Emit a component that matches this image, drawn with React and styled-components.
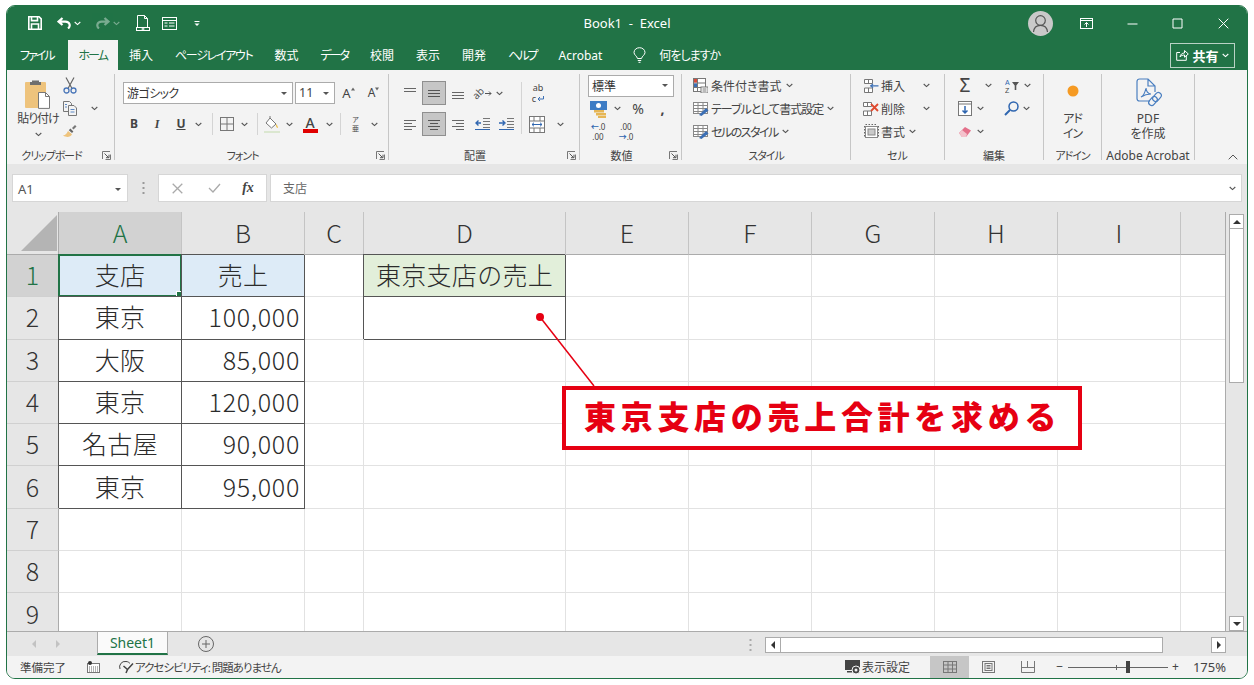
import React from 'react';
import styled, { createGlobalStyle } from 'styled-components';

const UI = `"Noto Sans", "Noto Sans CJK JP", sans-serif`;
const JP = `"Noto Sans CJK JP", "Noto Sans", sans-serif`;
const GREEN = '#217346';

const Global = createGlobalStyle`
  html, body { margin: 0; background: #fff; }
  body { font-family: ${UI}; font-feature-settings: "palt"; color: #333; overflow: hidden; }
  * { box-sizing: border-box; }
  svg { display: block; flex: none; }
`;

const Page = styled.div`
  padding: 5px 0 0 6px;
`;

const Win = styled.div`
  width: 1242px;
  height: 674px;
  border: 1px solid ${GREEN};
  border-radius: 9px;
  overflow: hidden;
  display: flex;
  flex-direction: column;
  background: #f3f3f3;
`;

const TitleBar = styled.header`
  height: 34px;
  background: ${GREEN};
  color: #fff;
  display: grid;
  grid-template-columns: 1fr auto 1fr;
  align-items: center;
  font-size: 13px;
`;

const Quick = styled.div`
  display: flex;
  align-items: center;
  padding-left: 21px;
  height: 100%;
`;

const Title = styled.span`
  white-space: pre;
`;

const Slot = styled.span`
  display: inline-flex;
  align-items: center;
  justify-content: center;
  width: ${(p) => p.$w}px;
  height: 100%;
  flex: none;
  opacity: ${(p) => p.$dim || 1};
`;

const WinTools = styled.div`
  display: flex;
  align-items: center;
  justify-content: flex-end;
  height: 100%;
  padding-right: 1px;
`;

const Avatar = styled.div`
  width: 25px;
  height: 25px;
  border-radius: 50%;
  background: #c9c9c9;
  display: flex;
  align-items: center;
  justify-content: center;
  margin-right: 10px;
`;

const TabBar = styled.nav`
  height: 30px;
  background: ${GREEN};
  color: #fff;
  display: flex;
  align-items: center;
  padding-left: 2px;
  font-size: 12px;
`;

const Tab = styled.div`
  padding: 0 ${(p) => p.$pr || p.$pad || 11}px 0 ${(p) => p.$pad || 11}px;
  height: 100%;
  display: flex;
  align-items: center;
  white-space: nowrap;
  letter-spacing: ${(p) => p.$ls || 0}px;
  background: ${(p) => (p.$active ? '#f3f3f3' : 'transparent')};
  color: ${(p) => (p.$active ? GREEN : '#fff')};
`;

const Share = styled.div`
  margin-left: auto;
  margin-right: 12px;
  width: 65px;
  height: 25px;
  border: 1px solid #b9d2c5;
  display: flex;
  align-items: center;
  justify-content: center;
  gap: 3px;
  font-weight: 700;
  font-size: 13px;
`;

const Kana = styled.span`
  letter-spacing: ${(p) => p.$ls || -1}px;
  white-space: nowrap;
  margin: ${(p) => p.$m || 0};
`;

const Ribbon = styled.section`
  height: 94px;
  padding-top: 4px;
  display: flex;
  background: #f3f3f3;
  font-size: 12px;
  color: #444;
`;

const Group = styled.div`
  width: ${(p) => p.$w}px;
  height: 86px;
  border-right: 1px solid #c6c6c6;
  display: flex;
  flex-direction: column;
  flex: none;
`;

const GroupBody = styled.div`
  height: 73px;
  flex: none;
  padding-left: ${(p) => p.$left || 0}px;
  display: flex;
  flex-direction: ${(p) => (p.$col ? 'column' : 'row')};
`;

const GroupLabel = styled.div`
  height: 16px;
  flex: none;
  display: flex;
  align-items: center;
  font-size: ${(p) => p.$size || 11}px;
  white-space: nowrap;
  color: #444;
`;

const GroupName = styled.span`
  flex: 1;
  text-align: center;
  letter-spacing: ${(p) => p.$ls || 0}px;
`;

const Launch = styled.span`
  margin: 0 3px 0 6px;
`;

const Stack = styled.div`
  display: flex;
  flex-direction: column;
  width: ${(p) => (p.$w ? `${p.$w}px` : 'auto')};
`;

const StackRow = styled.div`
  height: 23px;
  flex: none;
  display: flex;
  align-items: center;
  white-space: nowrap;
`;

const ToolRows = styled.div`
  padding-top: 8px;
  display: flex;
  flex-direction: column;
  gap: 9px;
`;

const ToolRow = styled.div`
  height: 22px;
  display: flex;
  align-items: center;
`;

const Select = styled.div`
  width: ${(p) => p.$w}px;
  height: ${(p) => p.$h || 22}px;
  background: #fff;
  border: 1px solid #ababab;
  margin-right: ${(p) => p.$mr || 0}px;
  padding: 0 3px;
  display: flex;
  align-items: center;
  justify-content: space-between;
  font-size: 12px;
  color: #333;
  flex: none;
`;

const Caret = styled.span`
  width: 0;
  height: 0;
  border: 3px solid transparent;
  border-top: 3px solid #555;
  border-bottom: 0;
  margin: 0 2px;
`;

const Divider = styled.span`
  width: 1px;
  height: ${(p) => p.$h || 22}px;
  background: #d4d4d4;
  flex: none;
`;

const TallDivider = styled(Divider)`
  height: 52px;
  margin-top: 30px;
`;

const ToolButton = styled.span`
  width: ${(p) => p.$w}px;
  height: 24px;
  display: inline-flex;
  align-items: center;
  justify-content: center;
  flex: none;
  background: ${(p) => (p.$on ? '#c6c6c6' : 'transparent')};
  border: 1px solid ${(p) => (p.$on ? '#8f8f8f' : 'transparent')};
`;

const Glyph = styled.span`
  font-family: ${(p) => p.$font || UI};
  font-weight: ${(p) => p.$weight || 400};
  font-style: ${(p) => (p.$italic ? 'italic' : 'normal')};
  font-size: ${(p) => p.$size || 12}px;
  color: ${(p) => p.$color || '#444'};
  line-height: 1;
  text-decoration: ${(p) => (p.$under ? 'underline' : 'none')};
`;

const TinyStack = styled.span`
  display: flex;
  flex-direction: column;
  align-items: center;
  font-size: ${(p) => p.$size || 8}px;
  line-height: ${(p) => (p.$size || 8) + 2}px;
  color: #444;
  white-space: nowrap;
`;

const BlueMark = styled.span`
  color: #2f66b0;
  font-weight: 700;
`;

const Orient = styled.span`
  display: inline-flex;
  align-items: center;
  gap: 1px;
`;

const RotatedAb = styled.span`
  display: inline-block;
  transform: rotate(-45deg);
  font-size: 10px;
  line-height: 10px;
  color: #555;
`;

const ColorA = styled.span`
  display: flex;
  flex-direction: column;
  align-items: center;
  width: 16px;
  font-size: 14px;
  line-height: 13px;
  font-weight: 500;
  color: #444;
  &::after {
    content: '';
    width: 15px;
    height: 4px;
    background: #e00000;
  }
`;

const Big = styled.div`
  width: ${(p) => p.$w || '100%'};
  display: flex;
  flex-direction: column;
  align-items: center;
  padding-top: ${(p) => p.$top || 0}px;
  font-size: 12px;
  line-height: 15px;
  text-align: center;
`;

const BigIcon = styled.div`
  height: ${(p) => p.$h}px;
  margin-bottom: ${(p) => p.$mb || 0}px;
  display: flex;
  align-items: center;
  justify-content: center;
`;

const Collapse = styled.div`
  margin-left: auto;
  margin-right: 9px;
  align-self: flex-end;
  padding-bottom: 4px;
`;

const FormulaBar = styled.section`
  height: 48px;
  background: #e6e6e6;
  display: flex;
  align-items: flex-start;
  padding: 10px 5px 0 5px;
`;

const NameBox = styled.div`
  width: 116px;
  height: 28px;
  background: #fff;
  border: 1px solid #d6d6d6;
  display: flex;
  align-items: center;
  justify-content: space-between;
  padding: 2px 4px 0 5px;
  font-size: 13px;
  color: #555;
`;

const Dots = styled.span`
  width: 30px;
  height: 28px;
  display: flex;
  align-items: center;
  justify-content: center;
`;

const FormulaTools = styled.div`
  width: 109px;
  height: 28px;
  background: #fff;
  border: 1px solid #d6d6d6;
  display: flex;
  align-items: center;
  padding-left: 9px;
`;

const FormulaInput = styled.div`
  flex: 1;
  margin-left: 3px;
  height: 28px;
  background: #fff;
  border: 1px solid #d6d6d6;
  display: flex;
  align-items: center;
  justify-content: space-between;
  padding: 0 5px 0 12px;
  font-size: 12px;
  color: #666;
`;

const Sheet = styled.section`
  height: 419px;
  flex: none;
  display: flex;
  background: #e6e6e6;
  position: relative;
`;

const Grid = styled.div`
  width: 1219px;
  height: 419px;
  overflow: hidden;
  display: grid;
  grid-template-columns: 52px 123px 123px 59px 202px 123px 123px 123px 123px 123px 45px;
  grid-template-rows: 43px repeat(9, 42.3px);
  background: #fff;
  border-right: 1px solid #ababab;
  font-family: ${JP};
  font-size: 25px;
  font-feature-settings: normal;
  font-weight: 300;
  color: #2b2b2b;
`;

const Corner = styled.div`
  background: #e6e6e6;
  border-bottom: 1px solid #ababab;
  border-right: 1px solid #ababab;
  display: flex;
  align-items: center;
  justify-content: flex-end;
  padding-right: 1px;
`;

const ColHead = styled.div`
  background: ${(p) => (p.$on ? '#d2d2d2' : '#e6e6e6')};
  color: ${(p) => (p.$on ? GREEN : '#333')};
  border-right: 1px solid #c4c4c4;
  border-bottom: 1px solid #ababab;
  padding-bottom: 2px;
  display: flex;
  align-items: center;
  justify-content: center;
`;

const RowHead = styled.div`
  background: ${(p) => (p.$on ? '#d2d2d2' : '#e6e6e6')};
  color: ${(p) => (p.$on ? GREEN : '#333')};
  border-right: 1px solid #ababab;
  border-bottom: 1px solid #d0d0d0;
  padding-bottom: 3px;
  display: flex;
  align-items: center;
  justify-content: center;
`;

const Cell = styled.div`
  position: relative;
  display: flex;
  align-items: center;
  justify-content: ${(p) => (p.$right ? 'flex-end' : 'center')};
  padding: 0 ${(p) => (p.$right ? 4 : 0)}px 3px 0;
  letter-spacing: ${(p) => (p.$right ? 0.7 : 0.3)}px;
  background: ${(p) => p.$fill || '#fff'};
  border-right: 1px solid ${(p) => (p.$box ? '#555' : '#e2e2e2')};
  border-bottom: 1px solid ${(p) => (p.$box ? '#555' : '#e2e2e2')};
  box-shadow: ${(p) => (p.$box ? '-1px -1px 0 #555' : 'none')};
  white-space: nowrap;
  z-index: ${(p) => (p.$box ? 1 : 0)};
`;

const Selected = styled.span`
  position: absolute;
  inset: -1px;
  border: 2px solid ${GREEN};
  z-index: 2;
  &::after {
    content: '';
    position: absolute;
    right: -3px;
    bottom: -3px;
    width: 5px;
    height: 5px;
    background: ${GREEN};
    border: 1px solid #fff;
  }
`;

const VScroll = styled.div`
  width: 15px;
  margin: 2px 0 0 3px;
  display: flex;
  flex-direction: column;
  height: 417px;
`;

const ScrollBtn = styled.div`
  height: ${(p) => p.$h || 15}px;
  width: ${(p) => p.$w || '100%'};
  flex: none;
  background: #fff;
  border: 1px solid #ababab;
  display: flex;
  align-items: center;
  justify-content: center;
`;

const Tri = styled.span`
  width: 0;
  height: 0;
  border-style: solid;
  border-color: transparent;
  opacity: ${(p) => p.$dim || 1};
  ${(p) => p.$dir === 'up' && 'border-width: 0 4px 4px; border-bottom-color: #333;'}
  ${(p) => p.$dir === 'down' && 'border-width: 4px 4px 0; border-top-color: #333;'}
  ${(p) => p.$dir === 'left' && 'border-width: 4px 4px 4px 0; border-right-color: #333;'}
  ${(p) => p.$dir === 'right' && 'border-width: 4px 0 4px 4px; border-left-color: #333;'}
`;

const VThumb = styled.div`
  height: 154px;
  flex: none;
  background: #fff;
  border: 1px solid #ababab;
  border-top: 0;
`;

const VRest = styled.div`
  flex: 1;
`;

const Callout = styled.div`
  position: absolute;
  left: 555px;
  top: 174px;
  width: 520px;
  height: 64px;
  background: #fff;
  border: 4px solid #e60012;
  z-index: 3;
  display: flex;
  align-items: center;
  padding: 0 0 6px 18px;
  font-family: ${JP};
  font-feature-settings: normal;
  font-weight: 900;
  font-size: 32px;
  letter-spacing: 4.7px;
  color: #e60012;
  white-space: nowrap;
`;

const Leader = styled.svg`
  position: absolute;
  left: 520px;
  top: 95px;
  z-index: 3;
`;

const SheetBar = styled.section`
  height: 25px;
  flex: none;
  background: #e6e6e6;
  border-top: 1px solid #ababab;
  display: flex;
  align-items: flex-start;
`;

const Nav = styled.div`
  width: 90px;
  height: 24px;
  display: flex;
  align-items: center;
  gap: 20px;
  padding-left: 25px;
`;

const SheetTab = styled.div`
  width: 71px;
  height: 23px;
  background: #fafafa;
  border-left: 1px solid #ababab;
  border-right: 1px solid #ababab;
  border-bottom: 2px solid ${GREEN};
  color: ${GREEN};
  font-size: 14px;
  display: flex;
  align-items: center;
  justify-content: center;
`;

const AddSheet = styled.div`
  margin-left: 30px;
  height: 24px;
  display: flex;
  align-items: center;
`;

const HScroll = styled.div`
  margin-left: auto;
  margin-right: 21px;
  margin-top: 5px;
  width: 477px;
  height: 16px;
  display: flex;
  align-items: stretch;
`;

const HThumb = styled.div`
  width: 382px;
  flex: none;
  background: #fff;
  border: 1px solid #ababab;
  border-left: 0;
`;

const HRest = styled.div`
  flex: 1;
`;

const HDots = styled.span`
  margin: 2px 13px 0 0;
`;

const Status = styled.footer`
  height: 22px;
  flex: none;
  background: #f3f3f3;
  display: flex;
  align-items: center;
  font-size: 11.5px;
  color: #444;
  padding-left: 13px;
`;

const StatusText = styled.span`
  white-space: nowrap;
  margin: 0 ${(p) => p.$mr || 0}px 0 ${(p) => p.$ml || 0}px;
  font-size: ${(p) => p.$size || 11.5}px;
  letter-spacing: ${(p) => p.$ls || 0}px;
`;

const StatusLeftIcon = styled.span`
  margin-left: 18px;
  display: flex;
  align-items: center;
`;

const StatusRight = styled.div`
  margin-left: auto;
  display: flex;
  align-items: center;
  height: 100%;
  padding-right: 21px;
`;

const ViewBtn = styled.span`
  width: 39px;
  height: 22px;
  display: inline-flex;
  align-items: center;
  justify-content: center;
  background: ${(p) => (p.$on ? '#c6c6c6' : 'transparent')};
`;

const Zoom = styled.div`
  position: relative;
  width: 100px;
  height: 1px;
  background: #666;
  margin: 0 4px 0 5px;
`;

const ZoomTick = styled.span`
  position: absolute;
  left: 48px;
  top: -2px;
  width: 1px;
  height: 5px;
  background: #666;
`;

const ZoomThumb = styled.span`
  position: absolute;
  left: 58px;
  top: -6px;
  width: 4px;
  height: 12px;
  background: #444;
`;

const Grow = styled.span`
  display: inline-flex;
  align-items: flex-start;
`;

/* icons */
const Chev = ({ c = '#555' }) => (
  <svg width="7" height="5" viewBox="0 0 7 5">
    <path d="M.7 1l2.800 2.600L6.300 1" fill="none" stroke={c} strokeWidth="1.1" />
  </svg>
);

const LaunchIcon = () => (
  <svg width="9" height="9" viewBox="0 0 9 9">
    <path d="M.5 8V.5H8M8.500 3.500V8.500H3.500" fill="none" stroke="#777" />
    <path d="M2.500 2.500l4 4M4 6.700h3V3.700" fill="none" stroke="#555" />
  </svg>
);

const Lines = ({ rows, w = 14, h = 12, c = '#666' }) => (
  <svg width={w} height={h} viewBox={`0 0 ${w} ${h}`}>
    {rows.map(([a, b, y]) => (
      <path key={y} d={`M${a} ${y}.5H${b}`} stroke={c} />
    ))}
  </svg>
);

const SaveIcon = () => (
  <svg width="14" height="14" viewBox="0 0 14 14" fill="none" stroke="#fff" strokeWidth="1.6">
    <path d="M.8.800h10.300l2.100 2.100v10.300H.8z" />
    <path d="M3.500 1v3.600h6V1M3.500 13V8h7v5" />
  </svg>
);

const UndoIcon = ({ flip }) => (
  <svg width="14" height="12" viewBox="0 0 14 12" fill="none" stroke="#fff" strokeWidth="2.200">
    <path
      d="M5.500 1L1.600 4.600l3.900 3.400M2 4.600h6.300c5 0 5.400 5 2.700 6.900"
      transform={flip ? 'translate(14 0) scale(-1 1)' : undefined}
    />
  </svg>
);

const NewDocIcon = () => (
  <svg width="14" height="16" viewBox="0 0 14 16" fill="none" stroke="#fff">
    <path d="M1.500 12V.5h7l3 3V12M8.500 .5v3h3" />
    <rect x=".5" y="12.500" width="13" height="3" />
    <circle cx="7" cy="14" r="1" />
  </svg>
);

const FormIcon = () => (
  <svg width="15" height="13" viewBox="0 0 15 13" fill="none" stroke="#fff">
    <rect x=".5" y=".5" width="14" height="12" />
    <path d="M.5 3.500h14M2.500 6h3M7 6h5.500M2.500 9h3M7 9h5.500" />
  </svg>
);

const CustomizeIcon = () => (
  <svg width="6" height="7" viewBox="0 0 6 7">
    <path d="M.5 1.500h5" stroke="#fff" />
    <path d="M.5 3.500h5L3 6z" fill="#fff" />
  </svg>
);

const PersonIcon = () => (
  <svg width="19" height="19" viewBox="0 0 19 19" fill="none" stroke="#555" strokeWidth="1.2">
    <circle cx="9.500" cy="6.500" r="4.800" />
    <path d="M2.500 18c.4-4.500 3-6.600 7-6.600s6.600 2.100 7 6.600" />
  </svg>
);

const DisplayIcon = () => (
  <svg width="13" height="11" viewBox="0 0 13 11" fill="none" stroke="#fff">
    <rect x=".5" y=".5" width="12" height="10" />
    <path d="M.5 2.500h12" />
    <path d="M6.500 9V4.500M4.500 6.500l2-2 2 2" />
  </svg>
);

const CtrlIcon = ({ d }) => (
  <svg width="11" height="11" viewBox="0 0 11 11" fill="none" stroke="#fff">
    <path d={d} />
  </svg>
);

const BulbIcon = () => (
  <svg width="13" height="16" viewBox="0 0 13 16" fill="none" stroke="#fff">
    <path d="M4.500 11.500C4 9 1 8 1 5.500 1 2.700 3.500.7 6.500.7S12 2.700 12 5.500c0 2.500-3 3.500-3.500 6zM4.800 13.500h3.400M5.500 15.300h2" />
  </svg>
);

const ShareIcon = () => (
  <svg width="13" height="12" viewBox="0 0 13 12" fill="none" stroke="#fff">
    <path d="M4 3.500H.7v7.800h9.600V7M4 8c.3-2.600 2.200-4 4.500-4V1.500L12.300 5 8.500 8.200V6C6.700 6 5 6.500 4 8z" />
  </svg>
);

const PasteIcon = () => (
  <svg width="28" height="30" viewBox="0 0 28 30">
    <rect x="1" y="3" width="21" height="26" rx="1" fill="#eec37c" />
    <path d="M8 3V1.500h7V3h2v3H6V3z" fill="#6e6e6e" />
    <path d="M14.500 13.500h7l4 4v11.900h-11z" fill="#fff" stroke="#777" />
    <path d="M21.500 13.500v4h4" fill="none" stroke="#777" />
  </svg>
);

const CutIcon = () => (
  <svg width="14" height="17" viewBox="0 0 14 17" fill="none">
    <path d="M3 .5l6 11M11 .5L5 11.500" stroke="#666" strokeWidth="1.200" />
    <circle cx="3.500" cy="13.500" r="2.500" stroke="#4a76b8" strokeWidth="1.300" />
    <circle cx="10.500" cy="13.500" r="2.500" stroke="#4a76b8" strokeWidth="1.300" />
  </svg>
);

const CopyIcon = () => (
  <svg width="14" height="15" viewBox="0 0 14 15" fill="#f3f3f3" stroke="#777">
    <path d="M.5.500h6l2 2v8h-8z" />
    <path d="M5.500 4.500h5.500l2.500 2.500v7.500h-8z" />
    <path d="M7.500 8.500h4M7.500 11h4M2 3.500h2M2 6h2" stroke="#5c88c4" />
  </svg>
);

const BrushIcon = () => (
  <svg width="14" height="13" viewBox="0 0 14 13">
    <path d="M0 10.500c2.600-.3 4-2.300 5-4.500l4 3.200C7.500 12 4 13 0 10.500z" fill="#eec37c" />
    <path d="M5.800 5.200L7.400 3.600l3 2.800-1.400 1.700z" fill="#666" />
    <path d="M9 3l3-3 1.500 1.500-3 3z" fill="#777" />
  </svg>
);

const GrowIcon = ({ up }) => (
  <Grow>
    <Glyph $size={up ? 13 : 12}>A</Glyph>
    <svg width="4" height="4" viewBox="0 0 4 4">
      <path d={up ? 'M0 3.500L2 .5l2 3z' : 'M0 .5l2 3 2-3z'} fill="#666" />
    </svg>
  </Grow>
);

const BorderIcon = () => (
  <svg width="14" height="14" viewBox="0 0 14 14" fill="none" stroke="#777">
    <rect x=".5" y=".5" width="13" height="13" />
    <path d="M7 .5v13M.5 7h13" />
  </svg>
);

const FillIcon = () => (
  <svg width="17" height="17" viewBox="0 0 17 17">
    <path d="M6 2l6 6-4.500 4L2 7z" fill="#fff" stroke="#777" />
    <path d="M6 2V0" stroke="#777" />
    <path d="M12 8c1.500 1.500 2 3 2 4-1.500 0-2.500-2-2-4z" fill="#ecc04c" />
    <rect y="15" width="16" height="2" fill="#dbe7d0" />
  </svg>
);

const OrientArrow = () => (
  <svg width="7" height="7" viewBox="0 0 7 7" fill="none" stroke="#555">
    <path d="M0 3.500h6M4 1.500l2 2-2 2" />
  </svg>
);

const ReturnArrow = () => (
  <svg width="7" height="6" viewBox="0 0 7 6" fill="none" stroke="#3b6fb5">
    <path d="M6.500 0v3h-5M3 1L1 3l2 2" />
  </svg>
);

const IndentIcon = ({ flip }) => (
  <svg width="15" height="12" viewBox="0 0 15 12" fill="none">
    <path d="M8 .5h7M8 3.500h7M8 6.500h7M8 9.500h7" stroke="#777" />
    <path d={flip ? 'M0 5h5M3.500 2.500L6 5 3.500 7.500' : 'M6 5H1M3.500 2.500L1 5l2.500 2.500'} stroke="#2f66b0" strokeWidth="1.400" />
    <path d="M0 11.500h15" stroke="#2f66b0" />
  </svg>
);

const MergeIcon = () => (
  <svg width="16" height="17" viewBox="0 0 16 17" fill="#fff" stroke="#777">
    <rect x=".5" y=".5" width="15" height="16" />
    <path d="M.5 5h15M.5 12h15M5 .5V5M11 .5V5M5 12v4.500M11 12v4.500" />
    <path d="M3 8.500h10M5 6.700L3 8.500l2 1.800M11 6.700l2 1.800-2 1.800" stroke="#2f66b0" fill="none" />
  </svg>
);

const CurrencyIcon = () => (
  <svg width="19" height="18" viewBox="0 0 19 18">
    <rect x="1" y="1" width="17" height="9" fill="#3d7cc4" />
    <circle cx="9.500" cy="5.500" r="2.500" fill="#fff" />
    <rect x="5" y="10" width="10" height="2.500" fill="#e6b655" />
    <rect x="7" y="13" width="10" height="2.500" fill="#e6b655" />
    <rect x="9" y="16" width="8" height="2" fill="#e6b655" />
  </svg>
);

const CondIcon = () => (
  <svg width="15" height="15" viewBox="0 0 15 15" fill="#fff" stroke="#777">
    <rect x=".5" y=".5" width="12" height="13" />
    <path d="M.5 5h12M.5 9.500h12M4.500 .5v13" />
    <rect x="1" y="1" width="3" height="3.500" fill="#d84a3a" stroke="none" />
    <rect x="1" y="5.500" width="3" height="3.500" fill="#3b6fb5" stroke="none" />
    <rect x="8" y="9" width="7" height="6" fill="#fff" />
    <path d="M9.500 11h4M9.500 13h4" />
  </svg>
);

const TableStyleIcon = () => (
  <svg width="17" height="14" viewBox="0 0 17 14" fill="#fff" stroke="#888">
    <rect x=".5" y=".5" width="14" height="11" />
    <path d="M.5 3.500h14M.5 6.500h14M.5 9.500h14M5 .5v11M10 .5v11" />
    <path d="M6 13l7-7 2.500 2.500-7 5.500z" fill="#3b6fb5" stroke="none" />
  </svg>
);

const InsertIcon = () => (
  <svg width="15" height="14" viewBox="0 0 15 14" fill="#fff" stroke="#777">
    <path d="M.5.500h8v4h-8zM.5 9h8v4.500h-8zM4.500 .5v4M4.500 9v4.500" />
    <path d="M6 6.800h8.500M9 4.800L7 6.800l2 2" fill="none" stroke="#3b6fb5" strokeWidth="1.200" />
  </svg>
);

const DeleteIcon = () => (
  <svg width="17" height="14" viewBox="0 0 17 14" fill="#fff" stroke="#777">
    <path d="M.5.500h8v4h-8zM.5 9h8v4.500h-8zM4.500 .5v4M4.500 9v4.500" />
    <path d="M8 2l7 7M15 2L8 9" fill="none" stroke="#e04a2f" strokeWidth="1.800" />
  </svg>
);

const FormatIcon = () => (
  <svg width="15" height="15" viewBox="0 0 15 15" fill="#fff" stroke="#888">
    <rect x="1.500" y="2.500" width="12" height="11" />
    <rect x="4" y="5" width="7" height="6" fill="#c9c9c9" />
    <path d="M1.500 .5h12M.5 2v11M14.500 2v11" strokeDasharray="1.500 1.500" stroke="#666" />
  </svg>
);

const FillDownIcon = () => (
  <svg width="14" height="15" viewBox="0 0 14 15" fill="#fff" stroke="#777">
    <rect x=".5" y=".5" width="13" height="14" />
    <path d="M.5 3h13" />
    <path d="M7 5v7M4.500 9.500L7 12l2.500-2.500" fill="none" stroke="#2f66b0" strokeWidth="1.500" />
  </svg>
);

const SortIcon = () => (
  <svg width="14" height="14" viewBox="0 0 14 14">
    <text x="0" y="6" fontSize="7" fill="#2f66b0" fontFamily="Liberation Sans">A</text>
    <text x="0" y="13.500" fontSize="7" fill="#444" fontFamily="Liberation Sans">Z</text>
    <path d="M7 3h7l-2.700 3.500V11H9.700V6.500z" fill="#555" />
  </svg>
);

const FindIcon = () => (
  <svg width="15" height="15" viewBox="0 0 15 15" fill="none" stroke="#2f66b0" strokeWidth="1.500">
    <circle cx="9.500" cy="5.500" r="4.500" />
    <path d="M6 9l-5 5" strokeWidth="2" />
  </svg>
);

const EraserIcon = () => (
  <svg width="13" height="11" viewBox="0 0 13 11">
    <path d="M0 7l6-6 6 3.500L7 11H3z" fill="#e4708a" />
    <path d="M0 7l3-3 5 4-1 3H3z" fill="#f4c2cc" />
  </svg>
);

const AcrobatIcon = () => (
  <svg width="27" height="30" viewBox="0 0 27 30" fill="none" stroke="#4a7fc0" strokeWidth="1.200">
    <path d="M15 23H4.500A2.500 2.500 0 012 20.500v-17A2.500 2.500 0 014.500 1H13l7 7v6M13 1v7h7" />
    <path d="M6 19c2-1 4-4 5-9 0 3 2 6 5 6-3 0-7 1-10 3z" />
    <rect x="15" y="18" width="6" height="10" rx="3" transform="rotate(40 18 23)" />
    <rect x="19" y="14" width="6" height="10" rx="3" transform="rotate(40 22 19)" />
  </svg>
);

const Triangle = () => (
  <svg width="36" height="36" viewBox="0 0 36 36">
    <path d="M36 0v36H0z" fill="#b4b4b4" />
  </svg>
);

const GridIcon = () => (
  <svg width="14" height="12" viewBox="0 0 14 12" fill="none" stroke="#777">
    <rect x=".5" y=".5" width="13" height="11" />
    <path d="M5 .5v11M9.500 .5v11M.5 4h13M.5 8h13" />
  </svg>
);

const PageIcon = () => (
  <svg width="13" height="12" viewBox="0 0 13 12" fill="none" stroke="#777">
    <rect x=".5" y=".5" width="12" height="11" />
    <rect x="3" y="2.500" width="7" height="7" />
    <path d="M4.500 4.500h4M4.500 6h4M4.500 7.500h4" />
  </svg>
);

const BreakIcon = () => (
  <svg width="14" height="12" viewBox="0 0 14 12" fill="none" stroke="#777">
    <path d="M.5 0v11.500h13V0M.5 6.500h13M6.500 0v6.500" />
  </svg>
);

const StatusMacroIcon = () => (
  <svg width="13" height="12" viewBox="0 0 13 12">
    <rect x=".5" y="2.500" width="12" height="9" fill="#fff" stroke="#777" />
    <rect x="1" y="0" width="4" height="4" rx="2" fill="#333" />
    <path d="M2 6h9M2 8h9M2 10h9" stroke="#666" strokeDasharray="1 1" />
  </svg>
);

const A11yIcon = () => (
  <svg width="17" height="14" viewBox="0 0 17 14" fill="none" stroke="#444">
    <path d="M2 9A5.500 5.500 0 018 1.500c2 0 3 1 4 2" />
    <path d="M5.500 6l4 3.500 5.500-6" strokeWidth="1.500" />
    <path d="M8 13l1.500-3.500" strokeWidth="1.500" />
  </svg>
);

const DisplaySetIcon = () => (
  <svg width="17" height="15" viewBox="0 0 17 15">
    <rect y="0" width="15" height="10" fill="#444" />
    <circle cx="11" cy="10" r="4" fill="#444" stroke="#f3f3f3" />
    <circle cx="11" cy="10" r="1.500" fill="#f3f3f3" />
    <rect x="2" y="11" width="5" height="1.500" fill="#444" />
  </svg>
);

const GripDots = ({ c = '#999' }) => (
  <svg width="3" height="12" viewBox="0 0 3 12" fill={c}>
    <rect x=".5" y="0" width="2" height="2" />
    <rect x=".5" y="5" width="2" height="2" />
    <rect x=".5" y="10" width="2" height="2" />
  </svg>
);

const COLUMNS = ['A', 'B', 'C', 'D', 'E', 'F', 'G', 'H', 'I', ''];
const BLUE = '#ddebf7';
const MINT = '#e2efda';

const CELLS = {
  A1: { text: '支店', fill: BLUE, box: true, selected: true },
  B1: { text: '売上', fill: BLUE, box: true },
  A2: { text: '東京', box: true },
  B2: { text: '100,000', box: true, right: true },
  A3: { text: '大阪', box: true },
  B3: { text: '85,000', box: true, right: true },
  A4: { text: '東京', box: true },
  B4: { text: '120,000', box: true, right: true },
  A5: { text: '名古屋', box: true },
  B5: { text: '90,000', box: true, right: true },
  A6: { text: '東京', box: true },
  B6: { text: '95,000', box: true, right: true },
  D1: { text: '東京支店の売上', fill: MINT, box: true },
  D2: { text: '', box: true },
};

const TABS = [
  { t: '挿入' },
  { t: 'ページレイアウト', ls: -1.3 },
  { t: '数式' },
  { t: 'データ', ls: -2 },
  { t: '校閲' },
  { t: '表示' },
  { t: '開発' },
  { t: 'ヘルプ', ls: -2 },
  { t: 'Acrobat' },
];

function Spreadsheet() {
  const rows = [1, 2, 3, 4, 5, 6, 7, 8, 9];
  return (
    <Grid>
      <Corner><Triangle /></Corner>
      {COLUMNS.map((c, i) => (
        <ColHead key={`h${i}`} $on={c === 'A'}>{c}</ColHead>
      ))}
      {rows.map((r) => (
        <React.Fragment key={r}>
          <RowHead $on={r === 1}>{r}</RowHead>
          {COLUMNS.map((c, i) => {
            const cell = CELLS[`${c}${r}`] || {};
            return (
              <Cell key={i} $fill={cell.fill} $box={cell.box} $right={cell.right}>
                {cell.text}
                {cell.selected && <Selected />}
              </Cell>
            );
          })}
        </React.Fragment>
      ))}
    </Grid>
  );
}

export default function App() {
  return (
    <Page>
      <Global />
      <Win>
        <TitleBar>
          <Quick>
            <Slot $w={14}><SaveIcon /></Slot>
            <Slot $w={15} />
            <Slot $w={14}><UndoIcon /></Slot>
            <Slot $w={12}><Chev c="#fff" /></Slot>
            <Slot $w={13} />
            <Slot $w={13} $dim={0.4}><UndoIcon flip /></Slot>
            <Slot $w={15} $dim={0.4}><Chev c="#fff" /></Slot>
            <Slot $w={12} />
            <Slot $w={14}><NewDocIcon /></Slot>
            <Slot $w={12} />
            <Slot $w={15}><FormIcon /></Slot>
            <Slot $w={16} />
            <Slot $w={8}><CustomizeIcon /></Slot>
          </Quick>
          <Title>Book1  -  Excel</Title>
          <WinTools>
            <Avatar><PersonIcon /></Avatar>
            <Slot $w={46}><DisplayIcon /></Slot>
            <Slot $w={46}><CtrlIcon d="M.5 6h10" /></Slot>
            <Slot $w={45}><CtrlIcon d="M1 1h9v9H1z" /></Slot>
            <Slot $w={46}><CtrlIcon d="M.7.700l9.600 9.600M10.300 .7L.7 10.300" /></Slot>
          </WinTools>
        </TitleBar>

        <TabBar>
          <Tab $ls={-2} $pr={14}>ファイル</Tab>
          <Tab $active $ls={-2}>ホーム</Tab>
          {TABS.map((tab) => <Tab key={tab.t} $ls={tab.ls}>{tab.t}</Tab>)}
          <Tab $pad={20}><BulbIcon /><Kana $m="0 0 0 13px">何をしますか</Kana></Tab>
          <Share><ShareIcon />共有<Chev c="#fff" /></Share>
        </TabBar>

        <Ribbon>
          <Group $w={108}>
            <GroupBody $left={6}>
              <Big $w="50px" $top={4}>
                <BigIcon $h={31} $mb={2}><PasteIcon /></BigIcon>
                <Kana>貼り付け</Kana>
                <BigIcon $h={17}><Chev /></BigIcon>
              </Big>
              <Stack $w={18}>
                <StackRow><CutIcon /></StackRow>
                <StackRow><CopyIcon /></StackRow>
                <StackRow><BrushIcon /></StackRow>
              </Stack>
              <Stack $w={26}>
                <StackRow />
                <StackRow><Slot $w={26}><Chev /></Slot></StackRow>
              </Stack>
            </GroupBody>
            <GroupLabel>
              <GroupName $ls={-1.1}>クリップボード</GroupName>
              <Launch><LaunchIcon /></Launch>
            </GroupLabel>
          </Group>

          <Group $w={274}>
            <GroupBody $col $left={8}>
              <ToolRows>
                <ToolRow>
                  <Select $w={170} $mr={2}><Kana $ls={-0.6}>游ゴシック</Kana><Caret /></Select>
                  <Select $w={40}><Glyph $size={12.5}>11</Glyph><Caret /></Select>
                  <Slot $w={1} />
                  <Slot $w={25}><GrowIcon up /></Slot>
                  <Slot $w={25}><GrowIcon /></Slot>
                </ToolRow>
                <ToolRow>
                  <Slot $w={22}><Glyph $size={12} $weight={700}>B</Glyph></Slot>
                  <Slot $w={24}><Glyph $size={12} $weight={700} $italic $font='"Liberation Serif", serif'>I</Glyph></Slot>
                  <Slot $w={24}><Glyph $size={12} $weight={700} $under>U</Glyph></Slot>
                  <Slot $w={11}><Chev /></Slot>
                  <Slot $w={8} />
                  <Divider />
                  <Slot $w={27}><BorderIcon /></Slot>
                  <Slot $w={9}><Chev /></Slot>
                  <Slot $w={8} />
                  <Divider />
                  <Slot $w={28}><FillIcon /></Slot>
                  <Slot $w={6}><Chev /></Slot>
                  <Slot $w={3} />
                  <Slot $w={30}><ColorA>A</ColorA></Slot>
                  <Slot $w={2} />
                  <Slot $w={5}><Chev /></Slot>
                  <Slot $w={8} />
                  <Divider />
                  <Slot $w={29}><TinyStack $size={7}><span>ア</span><span>亜</span></TinyStack></Slot>
                  <Slot $w={1} />
                  <Slot $w={6}><Chev /></Slot>
                </ToolRow>
              </ToolRows>
            </GroupBody>
            <GroupLabel>
              <GroupName $ls={-1}>フォント</GroupName>
              <Launch><LaunchIcon /></Launch>
            </GroupLabel>
          </Group>

          <Group $w={191}>
            <GroupBody $col $left={9}>
              <ToolRows>
                <ToolRow>
                  <ToolButton $w={24}><Lines rows={[[1, 13, 1], [1, 13, 4]]} /></ToolButton>
                  <ToolButton $w={24} $on><Lines rows={[[1, 13, 3], [1, 13, 6], [1, 13, 9]]} c="#555" /></ToolButton>
                  <ToolButton $w={24}><Lines rows={[[1, 13, 5], [1, 13, 8], [1, 13, 11]]} /></ToolButton>
                  <Slot $w={24}><Orient><RotatedAb>ab</RotatedAb><OrientArrow /></Orient></Slot>
                  <Slot $w={10}><Chev /></Slot>
                  <Slot $w={17} />
                  <TallDivider />
                  <Slot $w={32}><TinyStack $size={9}><span>ab</span><Orient>c<ReturnArrow /></Orient></TinyStack></Slot>
                </ToolRow>
                <ToolRow>
                  <ToolButton $w={24}><Lines rows={[[1, 13, 2], [1, 9, 5], [1, 13, 8], [1, 9, 11]]} /></ToolButton>
                  <ToolButton $w={24} $on><Lines rows={[[1, 13, 2], [3, 11, 5], [1, 13, 8], [3, 11, 11]]} c="#555" /></ToolButton>
                  <ToolButton $w={24}><Lines rows={[[1, 13, 2], [5, 13, 5], [1, 13, 8], [5, 13, 11]]} /></ToolButton>
                  <Slot $w={24}><IndentIcon /></Slot>
                  <Slot $w={25}><IndentIcon flip /></Slot>
                  <Slot $w={3} />
                  <Slot $w={30}><MergeIcon /></Slot>
                  <Slot $w={16}><Chev /></Slot>
                </ToolRow>
              </ToolRows>
            </GroupBody>
            <GroupLabel>
              <GroupName>配置</GroupName>
              <Launch><LaunchIcon /></Launch>
            </GroupLabel>
          </Group>

          <Group $w={102}>
            <GroupBody $col $left={8}>
              <StackRow><Select $w={86}>標準<Caret /></Select></StackRow>
              <StackRow>
                <Slot $w={20}><CurrencyIcon /></Slot>
                <Slot $w={18}><Chev /></Slot>
                <Slot $w={24}><Glyph $size={14}>%</Glyph></Slot>
                <Slot $w={25}><Glyph $size={14} $weight={700}>,</Glyph></Slot>
              </StackRow>
              <StackRow>
                <Slot $w={20}>
                  <TinyStack><span><BlueMark>←</BlueMark>.0</span><span>.00</span></TinyStack>
                </Slot>
                <Slot $w={8} />
                <Slot $w={20}>
                  <TinyStack><span>.00</span><span><BlueMark>→</BlueMark>.0</span></TinyStack>
                </Slot>
              </StackRow>
            </GroupBody>
            <GroupLabel>
              <GroupName>数値</GroupName>
              <Launch><LaunchIcon /></Launch>
            </GroupLabel>
          </Group>

          <Group $w={169}>
            <GroupBody $col $left={11}>
              <StackRow><CondIcon /><Kana $ls={0.001} $m="0 4px 0 3px">条件付き書式</Kana><Chev /></StackRow>
              <StackRow><TableStyleIcon /><Kana $m="0 4px 0 1px">テーブルとして書式設定</Kana><Chev /></StackRow>
              <StackRow><TableStyleIcon /><Kana $ls={-1.5} $m="0 4px 0 1px">セルのスタイル</Kana><Chev /></StackRow>
            </GroupBody>
            <GroupLabel>
              <GroupName $ls={-1}>スタイル</GroupName>
            </GroupLabel>
          </Group>

          <Group $w={94}>
            <GroupBody $col $left={11}>
              <StackRow><Slot $w={19}><InsertIcon /></Slot>挿入<Slot $w={14} /><Slot $w={14}><Chev /></Slot></StackRow>
              <StackRow><Slot $w={19}><DeleteIcon /></Slot>削除<Slot $w={14} /><Slot $w={14}><Chev /></Slot></StackRow>
              <StackRow><Slot $w={19}><FormatIcon /></Slot>書式<Slot $w={4} /><Chev /></StackRow>
            </GroupBody>
            <GroupLabel>
              <GroupName>セル</GroupName>
            </GroupLabel>
          </Group>

          <Group $w={99}>
            <GroupBody $col $left={13}>
              <StackRow>
                <Slot $w={14}><Glyph $size={19}>Σ</Glyph></Slot>
                <Slot $w={13} />
                <Slot $w={7}><Chev /></Slot>
                <Slot $w={13} />
                <Slot $w={14}><SortIcon /></Slot>
                <Slot $w={5} />
                <Slot $w={7}><Chev /></Slot>
              </StackRow>
              <StackRow>
                <Slot $w={14}><FillDownIcon /></Slot>
                <Slot $w={5} />
                <Slot $w={7}><Chev /></Slot>
                <Slot $w={19} />
                <Slot $w={16}><FindIcon /></Slot>
                <Slot $w={4} />
                <Slot $w={7}><Chev /></Slot>
              </StackRow>
              <StackRow>
                <Slot $w={14}><EraserIcon /></Slot>
                <Slot $w={5} />
                <Slot $w={7}><Chev /></Slot>
              </StackRow>
            </GroupBody>
            <GroupLabel>
              <GroupName>編集</GroupName>
            </GroupLabel>
          </Group>

          <Group $w={58}>
            <GroupBody>
              <Big $top={5}>
                <BigIcon $h={24} $mb={8}>
                  <svg width="12" height="12" viewBox="0 0 12 12"><circle cx="6" cy="6" r="5.500" fill="#f59a23" /></svg>
                </BigIcon>
                <Kana>アド<br />イン</Kana>
              </Big>
            </GroupBody>
            <GroupLabel>
              <GroupName $ls={-1}>アドイン</GroupName>
            </GroupLabel>
          </Group>

          <Group $w={93}>
            <GroupBody>
              <Big $top={5}>
                <BigIcon $h={28} $mb={4}><AcrobatIcon /></BigIcon>
                <span>PDF<br />を作成</span>
              </Big>
            </GroupBody>
            <GroupLabel $size={12}>
              <GroupName>Adobe Acrobat</GroupName>
            </GroupLabel>
          </Group>

          <Collapse>
            <svg width="10" height="6" viewBox="0 0 10 6"><path d="M.7 5.300L5 1l4.300 4.300" fill="none" stroke="#555" /></svg>
          </Collapse>
        </Ribbon>

        <FormulaBar>
          <NameBox>A1<Caret /></NameBox>
          <Dots><GripDots /></Dots>
          <FormulaTools>
            <Slot $w={18}><svg width="11" height="11" viewBox="0 0 11 11"><path d="M.7.700l9.600 9.600M10.300 .7L.7 10.300" stroke="#aaa" strokeWidth="1.300" /></svg></Slot>
            <Slot $w={19} />
            <Slot $w={18}><svg width="13" height="10" viewBox="0 0 13 10"><path d="M1 5l4 4 7-8" fill="none" stroke="#aaa" strokeWidth="1.300" /></svg></Slot>
            <Slot $w={16} />
            <Slot $w={18}><Glyph $size={14} $font='"Liberation Serif", serif' $italic $weight={700}>fx</Glyph></Slot>
          </FormulaTools>
          <FormulaInput>支店<Chev c="#555" /></FormulaInput>
        </FormulaBar>

        <Sheet>
          <Spreadsheet />
          <VScroll>
            <ScrollBtn><Tri $dir="up" /></ScrollBtn>
            <VThumb />
            <VRest />
            <ScrollBtn><Tri $dir="down" /></ScrollBtn>
          </VScroll>
          <Leader width="80" height="80" viewBox="0 0 80 80">
            <circle cx="13" cy="10" r="4" fill="#e60012" />
            <path d="M13 10l54 69" stroke="#e60012" strokeWidth="1.500" />
          </Leader>
          <Callout>東京支店の売上合計を求める</Callout>
        </Sheet>

        <SheetBar>
          <Nav>
            <Tri $dir="left" $dim={0.2} />
            <Tri $dir="right" $dim={0.2} />
          </Nav>
          <SheetTab>Sheet1</SheetTab>
          <AddSheet>
            <svg width="16" height="16" viewBox="0 0 16 16" fill="none" stroke="#666"><circle cx="8" cy="8" r="7.500" /><path d="M8 4v8M4 8h8" /></svg>
          </AddSheet>
          <HScroll>
            <HDots><GripDots c="#aaa" /></HDots>
            <ScrollBtn $h={16} $w="16px"><Tri $dir="left" /></ScrollBtn>
            <HThumb />
            <HRest />
            <ScrollBtn $h={16} $w="15px"><Tri $dir="right" /></ScrollBtn>
          </HScroll>
        </SheetBar>

        <Status>
          <StatusText $mr={21}>準備完了</StatusText>
          <StatusMacroIcon />
          <StatusLeftIcon><A11yIcon /></StatusLeftIcon>
          <StatusText $ls={-1}>アクセシビリティ: 問題ありません</StatusText>
          <StatusRight>
            <DisplaySetIcon />
            <StatusText $mr={20} $size={12}>表示設定</StatusText>
            <ViewBtn $on><GridIcon /></ViewBtn>
            <ViewBtn><PageIcon /></ViewBtn>
            <ViewBtn><BreakIcon /></ViewBtn>
            <Slot $w={9} />
            <Glyph $size={12}>−</Glyph>
            <Zoom><ZoomTick /><ZoomThumb /></Zoom>
            <Glyph $size={12}>+</Glyph>
            <StatusText $ml={14} $size={13}>175%</StatusText>
          </StatusRight>
        </Status>
      </Win>
    </Page>
  );
}
